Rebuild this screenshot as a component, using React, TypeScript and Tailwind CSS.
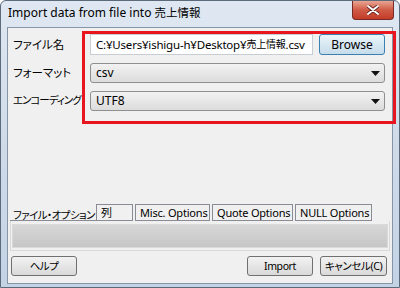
const ui = { fontFamily: '"Noto Sans", "Noto Sans CJK JP", sans-serif' };

const Select = ({ value }: { value: string }) => (
  <div className="flex h-[20px] w-[295px] items-center justify-between rounded-[3px] border border-[#8e8f8f] bg-gradient-to-b from-[#f2f2f2] to-[#dcdcdc] pl-[5px] pr-[4px]">
    <span className="text-[12px] leading-none text-black">{value}</span>
    <svg width="9" height="5" viewBox="0 0 9 5">
      <path d="M0 0h9L4.5 5z" fill="#111" />
    </svg>
  </div>
);

const Btn = ({ label, w }: { label: string; w: string }) => (
  <button
    className={`${w} h-[20px] whitespace-nowrap rounded-[3px] border border-[#707070] bg-gradient-to-b from-[#f2f2f2] to-[#d9d9d9] text-[10.5px] leading-none tracking-[-0.4px] text-black`}
  >
    {label}
  </button>
);

const tabs = ['列', 'Misc. Options', 'Quote Options', 'NULL Options'];
const tabW = ['w-[37px]', 'w-[75px]', 'w-[81px]', 'w-[77px]'];

export default function App() {
  return (
    <div
      className="relative h-[288px] w-[400px] overflow-hidden whitespace-nowrap rounded-t-[6px] border border-[#5c6a7a] bg-gradient-to-b from-[#dfe8f2] via-[#cfdbe9] to-[#c3d3e6] [font-feature-settings:'palt']"
      style={ui}
    >
      {/* title bar */}
      <div className="flex h-[26px] items-start justify-between">
        <span className="pl-[7px] pt-[3px] text-[12px] text-black">
          Import data from file into <span className="text-[11.5px]">売上情報</span>
        </span>
        <div className="mr-[5px] flex h-[19px] w-[42px] items-center justify-center rounded-b-[4px] border border-t-0 border-[#7a2a24] bg-gradient-to-b from-[#e8a493] via-[#cf5a45] to-[#c33c27]">
          <svg width="12" height="10" viewBox="0 0 12 10">
            <path d="M1 1l10 8M11 1L1 9" stroke="#5a1a12" strokeWidth="3.6" strokeLinecap="round" />
            <path d="M1 1l10 8M11 1L1 9" stroke="#fff" strokeWidth="2" strokeLinecap="round" />
          </svg>
        </div>
      </div>

      {/* client area */}
      <div className="mx-[6px] flex h-[257px] flex-col border border-[#8696a8] bg-[#f0f0f0]">
        <div className="flex flex-col gap-[8px] pl-[5px] pt-[6px]">
          <div className="flex items-center">
            <span className="w-[77px] text-[11.5px] text-black">ファイル名</span>
            <div className="flex h-[21px] w-[223px] items-center overflow-hidden border border-[#c8cdd3] bg-white pl-[5px] text-[11.5px] tracking-[-0.2px] text-black">
              C:¥Users¥ishigu-h¥Desktop¥<span className="text-[10px]">売上情報</span>.csv
            </div>
            <button className="ml-[6px] h-[21px] w-[66px] rounded-[3px] border border-[#3c7fb1] bg-gradient-to-b from-[#eaf5fb] to-[#c6dcea] text-[12px] leading-none text-black">
              Browse
            </button>
          </div>
          <div className="flex items-center">
            <span className="w-[77px] text-[11.5px] text-black">フォーマット</span>
            <Select value="csv" />
          </div>
          <div className="flex items-center">
            <span className="w-[77px] text-[10.5px] tracking-[-1px] text-black">エンコーディング</span>
            <Select value="UTF8" />
          </div>
        </div>

        {/* tabs */}
        <div className="mt-[93px] flex items-end pl-[2px]">
          <div className="flex h-[17px] w-[86px] items-end border-b border-[#898c95] pl-[3px] text-[10.5px] leading-none tracking-[-0.6px] text-black">
            ファイル・オプション
          </div>
          {tabs.map((t, i) => (
            <div
              key={t}
              className={`${tabW[i]} mr-[2px] flex h-[17px] items-center border border-[#898c95] bg-[#f0f0f0] pl-[4px] text-[11px] leading-none tracking-[-0.2px] text-black`}
            >
              {t}
            </div>
          ))}
        </div>
        <div className="mx-[2px] h-[30px] border-x border-b border-[#d9d9d9] px-[1px] pt-[3px]">
          <div className="h-[24px] border border-[#dadada] bg-gradient-to-b from-[#d7d7d7] to-[#c6c6c6]" />
        </div>

        {/* buttons */}
        <div className="mt-[5px] flex items-center justify-between pl-[3px] pr-[5px]">
          <Btn label="ヘルプ" w="w-[66px]" />
          <div className="flex gap-[7px]">
            <Btn label="Import" w="w-[66px]" />
            <Btn label="キャンセル(C)" w="w-[67px]" />
          </div>
        </div>
      </div>

      {/* red annotation box */}
      <div className="absolute left-[81px] top-[30px] h-[93px] w-[314px] border-[3px] border-[#e8141e]" />
    </div>
  );
}
